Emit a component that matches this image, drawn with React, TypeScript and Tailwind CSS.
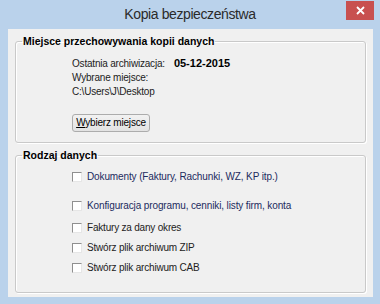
import React from "react";

const body = "font-['Liberation_Sans',Arial,sans-serif]";

function GroupBox({ title, className, children }: { title: string; className?: string; children: React.ReactNode }) {
    return (
        <fieldset
            className={`mx-[7px] rounded-[3px] border border-[#c9c9c9] shadow-[1px_1px_0_#ffffff,inset_1px_1px_0_#ffffff] ${className ?? ""}`}
        >
            <legend className="ml-[6px] px-[1px] text-[10.5px] leading-[12px] font-bold text-black">{title}</legend>
            <div className="pl-[56px]">{children}</div>
        </fieldset>
    );
}

function CheckRow({ label, navy, className }: { label: string; navy?: boolean; className?: string }) {
    return (
        <label className={`flex h-[14px] items-center gap-[5px] ${className ?? ""}`}>
            <span className="h-[10px] w-[10px] shrink-0 border border-t-[#8f8f8f] border-l-[#8f8f8f] border-b-[#e6e6e6] border-r-[#e6e6e6] bg-white" />
            <span
                className={`text-[10px] leading-[14px] ${navy ? "text-[#1c2b5e] tracking-[-0.12px]" : "text-[#222] tracking-[-0.2px]"}`}
            >
                {label}
            </span>
        </label>
    );
}

export default function App() {
    return (
        <div className={`flex h-[304px] w-[380px] flex-col bg-[#bad2eb] ${body}`}>
            {/* Title bar */}
            <div className="grid h-[29px] grid-cols-[1fr_auto_1fr]">
                <div />
                <div className="pt-[5px] text-[14px] leading-[18px] tracking-[-0.4px] text-[#2a2a2a]">
                    Kopia bezpieczeństwa
                </div>
                <div className="flex justify-end pr-[6px] pt-[1px]">
                    <div className="flex h-[19px] w-[28px] items-center justify-center bg-[#c8504f]">
                        <svg width="9" height="9" viewBox="0 0 9 9">
                            <path d="M1 1 L8 8 M8 1 L1 8" stroke="#ffffff" strokeWidth="1.8" />
                        </svg>
                    </div>
                </div>
            </div>

            {/* Client area */}
            <div className="ml-[8px] mr-[7px] mb-[7px] flex flex-1 flex-col bg-[#f0f0f0] pt-[6px]">
                <GroupBox title="Miejsce przechowywania kopii danych" className="pb-[9px]">
                    <div className="pt-[9px] text-[10px] leading-[14px] tracking-[-0.2px] text-[#222]">
                        <div className="flex items-baseline">
                            <span>Ostatnia archiwizacja:</span>
                            <span className="ml-[9px] text-[11px] font-bold tracking-normal text-black">05-12-2015</span>
                        </div>
                        <div>Wybrane miejsce:</div>
                        <div>C:\Users\J\Desktop</div>
                    </div>
                    <button className="mt-[15px] h-[18px] w-[78px] rounded-[3px] border border-[#acacac] bg-gradient-to-b from-[#f2f2f2] to-[#e2e2e2] text-[10px] leading-[16px] tracking-[-0.2px] text-black">
                        <span className="underline">W</span>ybierz miejsce
                    </button>
                </GroupBox>

                <GroupBox title="Rodzaj danych" className="mt-[6px] pb-[17px]">
                    <div className="flex flex-col pt-[9px]">
                        <CheckRow label="Dokumenty (Faktury, Rachunki, WZ, KP itp.)" navy />
                        <CheckRow label="Konfiguracja programu, cenniki, listy firm, konta" navy className="mt-[15px]" />
                        <CheckRow label="Faktury za dany okres" className="mt-[8px]" />
                        <CheckRow label="Stwórz plik archiwum ZIP" className="mt-[6px]" />
                        <CheckRow label="Stwórz plik archiwum CAB" className="mt-[6px]" />
                    </div>
                </GroupBox>
            </div>
        </div>
    );
}
